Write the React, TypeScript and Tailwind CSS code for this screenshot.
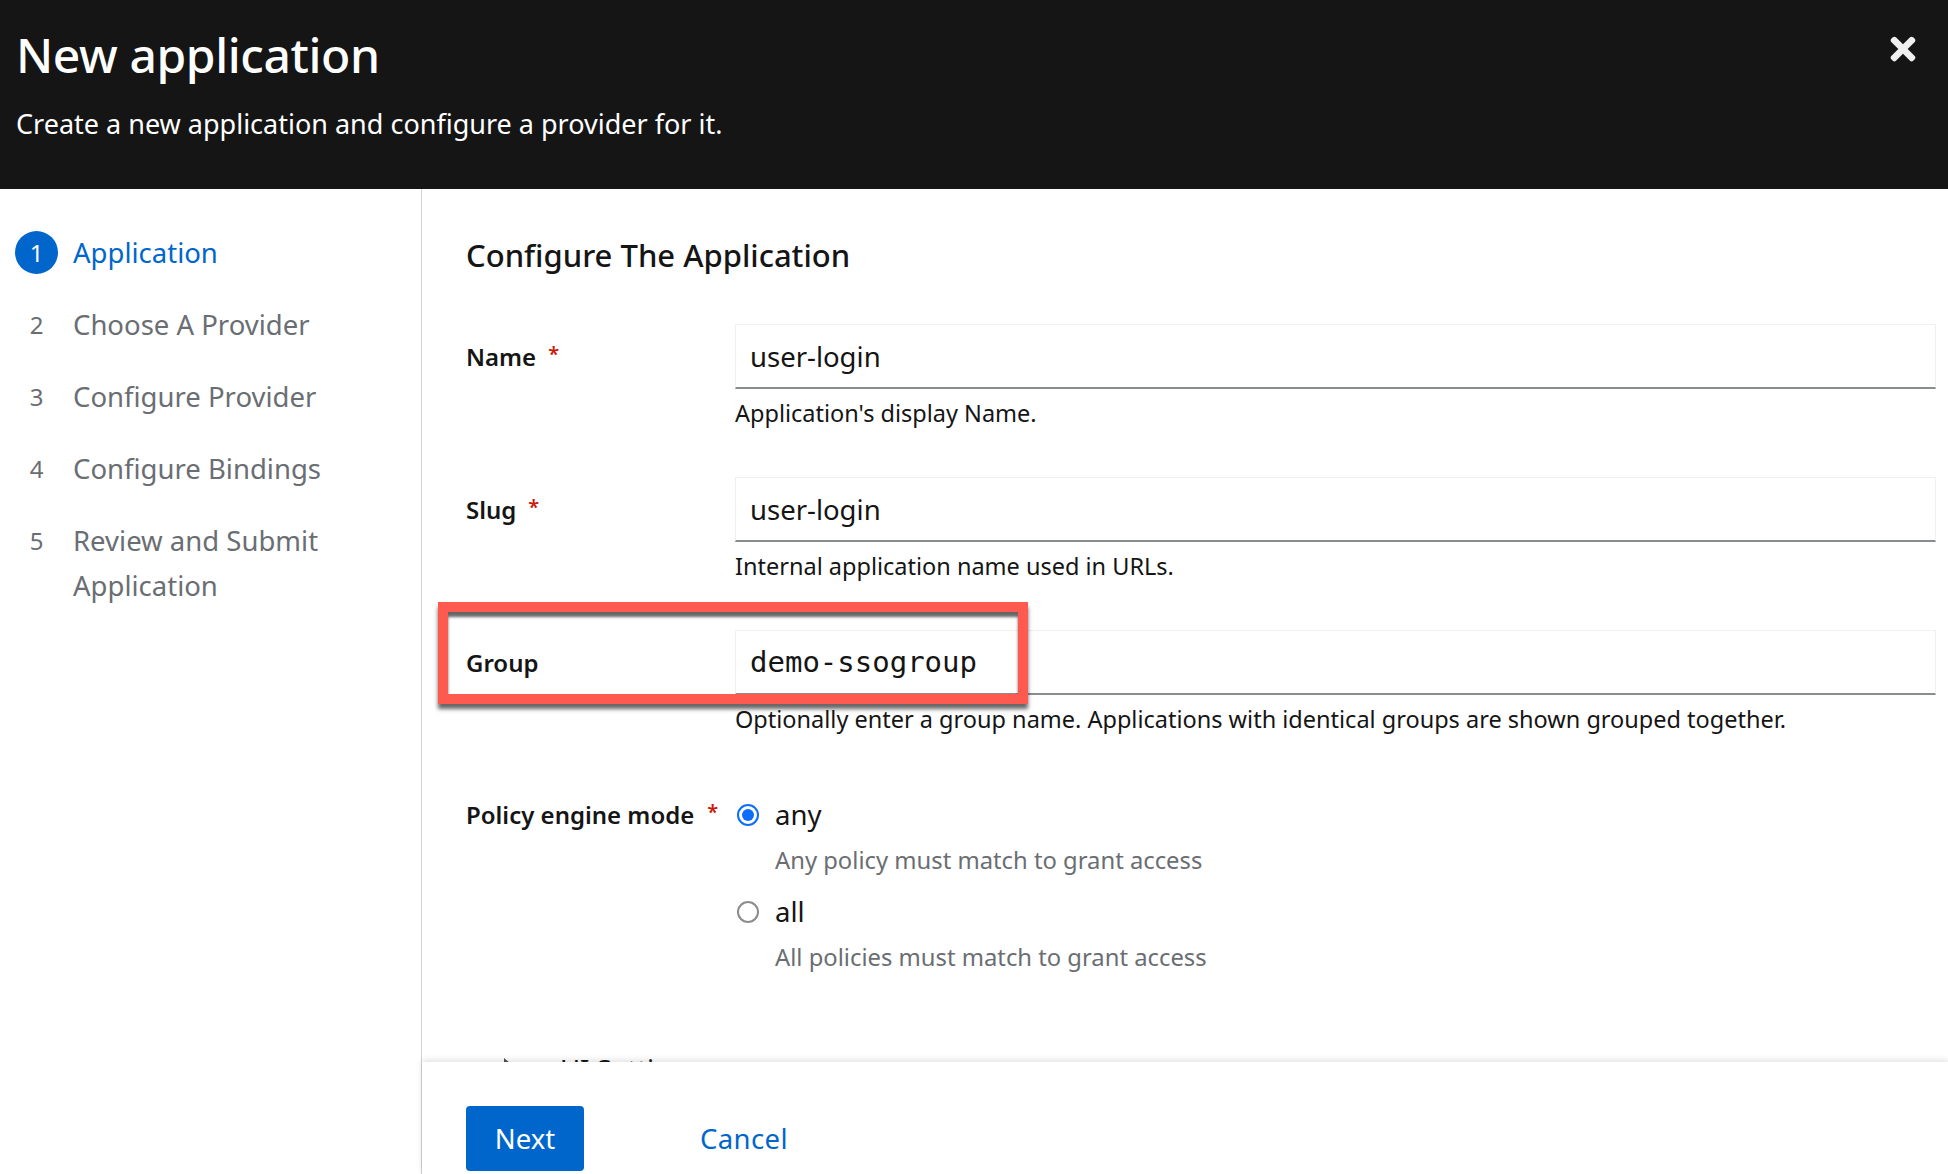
import { FaTimes } from 'react-icons/fa';

const steps = ['Application', 'Choose A Provider', 'Configure Provider', 'Configure Bindings', 'Review and Submit Application'];

function Field({ label, value, help, required, mono }: { label: string; value: string; help: string; required?: boolean; mono?: boolean }) {
  return (
    <div className="grid grid-cols-[269px_1fr] mb-[48px]">
      <div className="h-[65px] flex items-center text-[24px] font-semibold text-[#151515]">
        {label}
        {required && <span className="ml-[12px] -mt-[6px] text-[20px] text-[#c9190b]">*</span>}
      </div>
      <div>
        <div
          className={`h-[65px] flex items-center pl-[14px] pt-[2px] border border-[#f0f0f0] border-b-[2px] border-b-[#8a8d90] text-[#151515] ${
            mono ? "font-['DejaVu_Sans_Mono'] text-[29px]" : 'text-[27.5px]'
          }`}
        >
          {value}
        </div>
        <p className="mt-[9px] h-[31px] leading-[30px] text-[23.5px] text-[#151515]">{help}</p>
      </div>
    </div>
  );
}

function Radio({ label, help, checked }: { label: string; help: string; checked?: boolean }) {
  return (
    <div className="mb-[20px] ml-[2px]">
      <div className="flex items-center h-[34px] text-[27.5px] text-[#151515]">
        <span
          className={`w-[22px] h-[22px] rounded-full border-[2px] flex items-center justify-center ${
            checked ? 'border-[#0d6efd]' : 'border-[#8a8d90]'
          }`}
        >
          {checked && <span className="w-[12px] h-[12px] rounded-full bg-[#0d6efd]" />}
        </span>
        <span className="ml-[16px]">{label}</span>
      </div>
      <p className="mt-[13px] ml-[38px] h-[30px] leading-[30px] text-[23.8px] text-[#6a6e73]">{help}</p>
    </div>
  );
}

export default function App() {
  return (
    <div className="h-screen flex flex-col bg-white overflow-hidden font-['Noto_Sans',sans-serif]">
      {/* Header */}
      <header className="relative h-[189px] shrink-0 bg-[#151515] text-white pl-[16px]">
        <h1 className="pt-[27px] text-[48px] leading-[56px] font-medium tracking-[-0.4px]">New application</h1>
        <p className="mt-[25px] text-[27px] leading-[32px]">Create a new application and configure a provider for it.</p>
        <button className="absolute right-[27px] top-[31px] text-[#f0f0f0]">
          <FaTimes size={36} />
        </button>
      </header>

      <div className="flex-1 min-h-0 flex">
        {/* Steps */}
        <nav className="w-[422px] shrink-0 border-r border-[#d2d2d2] pt-[41px] pl-[15px]">
          {steps.map((step, i) => (
            <div key={step} className="flex mb-[27px]">
              <span
                className={`w-[43px] h-[43px] mt-[1px] shrink-0 rounded-full flex items-center justify-center text-[24px] ${
                  i === 0 ? 'bg-[#06c] text-white' : 'text-[#6a6e73]'
                }`}
              >
                {i + 1}
              </span>
              <span className={`ml-[15px] w-[300px] text-[27.5px] leading-[45px] ${i === 0 ? 'text-[#06c]' : 'text-[#6a6e73]'}`}>
                {step}
              </span>
            </div>
          ))}
        </nav>

        <main className="flex-1 min-w-0 flex flex-col">
          {/* Form */}
          <div className="flex-1 min-h-0 overflow-hidden pl-[44px] pr-[12px] pt-[46px]">
            <h2 className="h-[40px] leading-[40px] text-[31px] font-medium text-[#151515] mb-[49px]">Configure The Application</h2>
            <Field label="Name" value="user-login" help="Application's display Name." required />
            <Field label="Slug" value="user-login" help="Internal application name used in URLs." required />
            <Field label="Group" value="demo-ssogroup" help="Optionally enter a group name. Applications with identical groups are shown grouped together." mono />
            <div className="grid grid-cols-[269px_1fr] mt-[63px]">
              <div className="h-[34px] flex items-center text-[24px] font-semibold text-[#151515]">
                Policy engine mode
                <span className="ml-[13px] -mt-[6px] text-[20px] text-[#c9190b]">*</span>
              </div>
              <div>
                <Radio label="any" help="Any policy must match to grant access" checked />
                <Radio label="all" help="All policies must match to grant access" />
              </div>
            </div>
            <div className="flex items-center mt-[63px] ml-[38px] text-[27.5px] leading-[30px] text-[#151515]">
              <span className="w-0 h-0 border-y-[12px] border-y-transparent border-l-[14px] border-l-[#4f5255]" />
              <span className="ml-[42px]">UI Settings</span>
            </div>
          </div>

          {/* Footer */}
          <footer className="relative h-[112px] shrink-0 bg-white shadow-[0_-2px_6px_rgba(0,0,0,0.12)] pl-[44px] pt-[44px] flex items-start">
            <button className="w-[118px] h-[65px] rounded-[4px] bg-[#06c] text-white text-[27.5px]">Next</button>
            <button className="ml-[116px] h-[65px] text-[27.5px] tracking-[0.4px] text-[#06c]">Cancel</button>
          </footer>
        </main>
      </div>

      {/* Annotation */}
      <div className="absolute left-[438px] top-[602px] w-[590px] h-[102px] border-[10px] border-[#ff5a4f] shadow-[0_5px_4px_rgba(0,0,0,0.6),inset_0_5px_3px_rgba(0,0,0,0.6)]" />
    </div>
  );
}
